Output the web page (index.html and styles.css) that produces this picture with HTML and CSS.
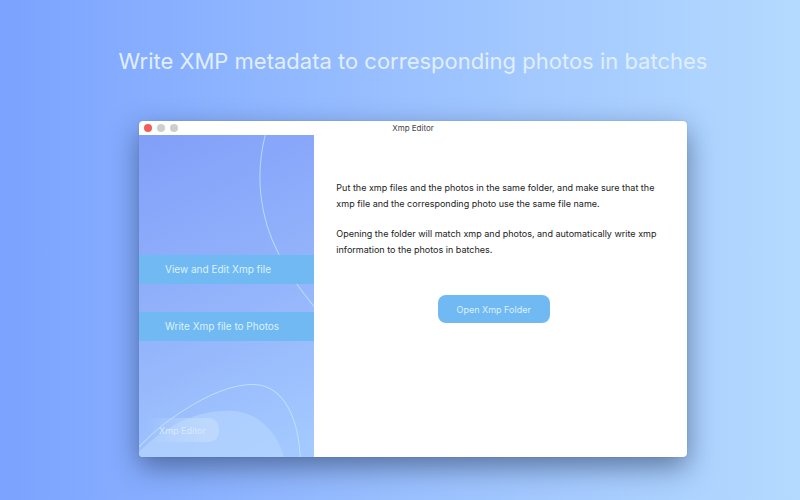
FILE: index.html
```
<!DOCTYPE html>
<html lang="en">
<head>
    <meta charset="UTF-8">
    <meta name="viewport" content="width=device-width, initial-scale=1.0">
    <title>Xmp Editor</title>
    <link rel="stylesheet" href="styles.css">
</head>
<body>
    <h1 class="headline">Write XMP metadata to corresponding photos in batches</h1>

    <div class="window">
        <header class="titlebar">
            <div class="lights">
                <button class="light close" aria-label="Close"></button>
                <button class="light" aria-label="Minimize"></button>
                <button class="light" aria-label="Zoom"></button>
            </div>
            <span class="title">Xmp Editor</span>
        </header>

        <div class="content">
            <aside class="sidebar">
                <!-- curves behind the menu -->
                <svg class="curves" viewBox="0 0 174 322" preserveAspectRatio="xMidYMax slice" fill="none" aria-hidden="true">
                    <path d="M0 317C20 297 50 276 88 276C120 276 137 298 144 322H0Z" fill="#b9d9ff" fill-opacity=".55"/>
                    <path d="M126 0C114 43 121 87 138 119C147 139 160 156 174 173" stroke="#c4e2ff" stroke-opacity=".8"/>
                    <path d="M0 312C30 280 80 250 112 250C145 250 158 285 160 322" stroke="#c4e6ff" stroke-opacity=".8"/>
                </svg>
                <nav class="menu">
                    <button class="menu-item">View and Edit Xmp file</button>
                    <button class="menu-item">Write Xmp file to Photos</button>
                </nav>
                <button class="badge">Xmp Editor</button>
            </aside>

            <main class="main">
                <p>Put the xmp files and the photos in the same folder, and make sure that the xmp file and the corresponding photo use the same file name.</p>
                <p>Opening the folder will match xmp and photos, and automatically write xmp information to the photos in batches.</p>
                <button class="open">Open Xmp Folder</button>
            </main>
        </div>
    </div>
</body>
</html>
```

FILE: styles.css
```
* {
    box-sizing: border-box;
}

body {
    margin: 0;
    min-height: 100vh;
    padding: 0 113px 43px 139px;
    display: flex;
    flex-direction: column;
    font-family: Inter, "Liberation Sans", sans-serif;
    background: linear-gradient(90deg, #7ba3ff 0%, #9ac0ff 50%, #b4daff 100%);
}

button {
    border: none;
    padding: 0;
    font-family: inherit;
    cursor: pointer;
}

.headline {
    margin: 0;
    height: 121px;
    display: flex;
    align-items: center;
    justify-content: center;
    font-size: 22px;
    font-weight: 400;
    white-space: nowrap;
    color: #e0efff;
}

.window {
    flex: 1;
    display: flex;
    flex-direction: column;
    border-radius: 4px;
    background: white;
    box-shadow: 0 10px 28px rgba(30, 45, 80, .55), 0 0 1px rgba(30, 50, 100, .4);
}

.titlebar {
    height: 14px;
    padding: 0 5px;
    display: grid;
    grid-template-columns: 1fr auto 1fr;
    align-items: center;
}

.lights {
    display: flex;
    gap: 5px;
}

.light {
    width: 8px;
    height: 8px;
    border-radius: 50%;
    background: #cdcfcd;
}

.close {
    background: #ee5f5b;
}

.title {
    font-size: 8px;
    line-height: 14px;
    color: #444;
}

.content {
    flex: 1;
    display: flex;
}

.sidebar {
    position: relative;
    width: 32%;
    padding: 120px 0 15px;
    display: flex;
    flex-direction: column;
    justify-content: space-between;
    align-items: flex-start;
    overflow: hidden;
    border-radius: 0 0 0 4px;
    background: linear-gradient(155deg, #829ff9 0%, #93b3fb 50%, #a4cbff 100%);
}

.curves {
    position: absolute;
    inset: 0;
    width: 100%;
    height: 100%;
}

.menu {
    position: relative;
    width: 100%;
    display: flex;
    flex-direction: column;
    gap: 28px;
}

.menu-item {
    height: 29px;
    padding: 0 0 2px 26px;
    text-align: left;
    font-size: 10px;
    color: #dcf2ff;
    background: #70b9f3;
}

.badge {
    position: relative;
    height: 24px;
    padding: 0 13px 0 20px;
    border-radius: 0 10px 10px 0;
    font-size: 9px;
    color: #d9e9ff;
    background: linear-gradient(90deg, rgba(196, 220, 252, 0) 10%, rgba(196, 220, 252, .7) 80%);
}

.main {
    flex: 1;
    padding: 45px 22px;
    display: flex;
    flex-direction: column;
}

.main p {
    margin: 0 0 14px;
    font-size: 9px;
    line-height: 16px;
    color: #222;
}

.open {
    align-self: center;
    margin: 23px 14px 0 0;
    padding: 0 19px;
    height: 28px;
    border-radius: 8px;
    font-size: 9px;
    color: #dcf2ff;
    background: #70b9f3;
}
```
